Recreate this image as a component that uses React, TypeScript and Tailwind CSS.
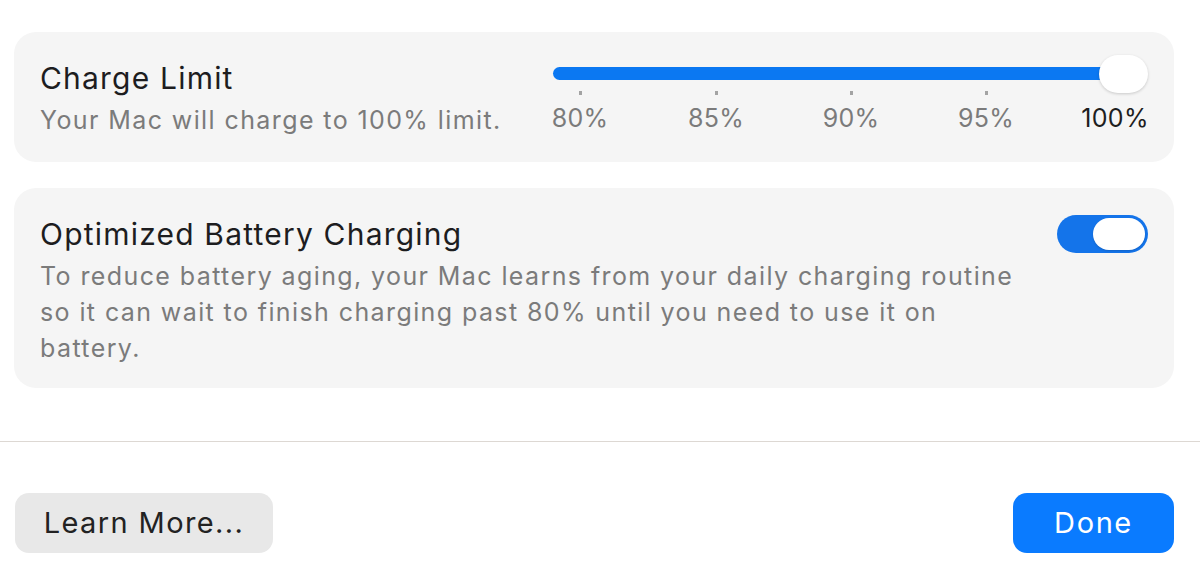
import React, { useState } from "react";

const ticks = [
  { label: "80%", ml: "ml-0" },
  { label: "85%", ml: "ml-[82px]" },
  { label: "90%", ml: "ml-[81px]" },
  { label: "95%", ml: "ml-[81px]" },
];

const ChargeSlider = () => (
  <div className="relative w-[595px] pt-[35px]">
    <div className="h-[13px] w-[570px] rounded-full bg-[#0b78f2]" />
    <div className="absolute right-0 top-[23px] h-[38px] w-[49px] rounded-[19px] bg-white shadow-[0_1px_3px_rgba(0,0,0,0.18)]" />
    <div className="mt-[11px] flex items-start">
      {ticks.map((t) => (
        <div key={t.label} className={`${t.ml} flex w-[54px] flex-col items-center`}>
          <div className="h-[4px] w-[3px] bg-[#a3a3a3]" />
          <span className="mt-[8px] text-[25px] leading-[30px] tracking-[0.3px] text-[#7b7b7b]">{t.label}</span>
        </div>
      ))}
      <div className="ml-[69px] flex w-[66px] flex-col items-center">
        <div className="h-[4px] w-[3px]" />
        <span className="mt-[8px] text-[25px] leading-[30px] tracking-[0.3px] text-[#1e1e1e]">100%</span>
      </div>
    </div>
  </div>
);

const Toggle = ({ on, onChange }: { on: boolean; onChange: () => void }) => (
  <button
    type="button"
    onClick={onChange}
    className={`flex h-[38px] w-[91px] items-center rounded-full p-[3px] ${on ? "justify-end bg-[#1474ea]" : "justify-start bg-[#d9d9d9]"}`}
  >
    <span className="h-[32px] w-[52px] rounded-full bg-white shadow-[0_1px_2px_rgba(0,0,0,0.15)]" />
  </button>
);

export default function App() {
  const [optimized, setOptimized] = useState(true);

  return (
    <div className="h-[585px] w-[1200px] bg-white pt-[32px] font-['Inter','Liberation_Sans',sans-serif] antialiased">
      <div className="flex flex-col gap-[26px] pl-[14px] pr-[26px]">
        <div className="flex h-[130px] justify-between rounded-[22px] bg-[#f5f5f5] pl-[26px] pr-[26px]">
          <div className="pt-[28px]">
            <h2 className="text-[30px] leading-[36px] tracking-[1.2px] text-[#1d1d1f]">Charge Limit</h2>
            <p className="mt-[6px] text-[25px] leading-[36px] tracking-[1.4px] text-[#7b7b7b]">
              Your Mac will charge to 100% limit.
            </p>
          </div>
          <ChargeSlider />
        </div>

        <div className="flex h-[200px] items-start justify-between rounded-[22px] bg-[#f5f5f5] pl-[26px] pr-[26px]">
          <div className="pt-[28px]">
            <h2 className="text-[30px] leading-[36px] tracking-[1.2px] text-[#1d1d1f]">Optimized Battery Charging</h2>
            <p className="mt-[6px] text-[25px] leading-[36px] tracking-[1.4px] text-[#7b7b7b]">
              To reduce battery aging, your Mac learns from your daily charging routine
              <br />
              so it can wait to finish charging past 80% until you need to use it on
              <br />
              battery.
            </p>
          </div>
          <div className="pt-[27px]">
            <Toggle on={optimized} onChange={() => setOptimized((v) => !v)} />
          </div>
        </div>
      </div>

      <div className="mt-[53px] h-[1px] bg-[#ddd8d3]" />

      <div className="mt-[51px] flex justify-between pl-[15px] pr-[26px]">
        <button
          type="button"
          className="h-[60px] w-[258px] rounded-[14px] bg-[#e8e8e8] text-[29px] tracking-[1.4px] text-[#222222]"
        >
          Learn More...
        </button>
        <button
          type="button"
          className="h-[60px] w-[161px] rounded-[14px] bg-[#0a7bff] text-[29px] tracking-[1.6px] text-white"
        >
          Done
        </button>
      </div>
    </div>
  );
}
